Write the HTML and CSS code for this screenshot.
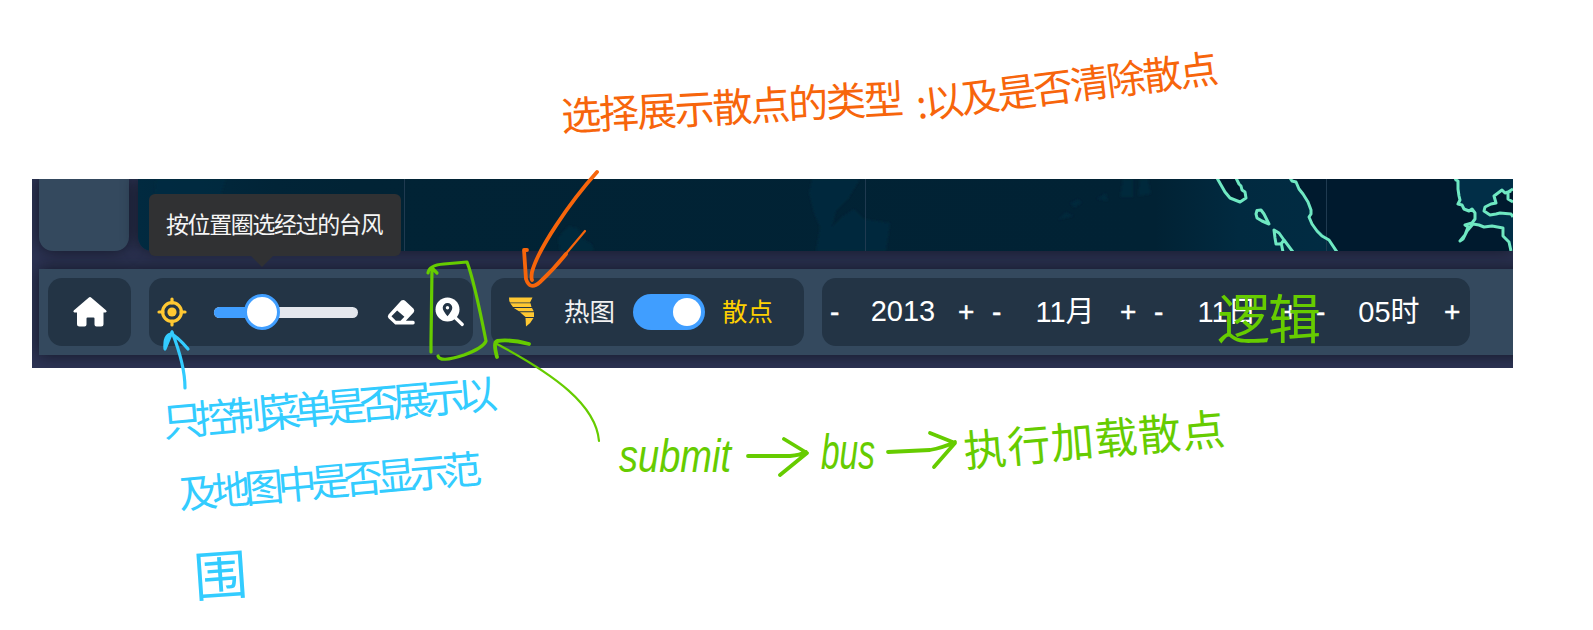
FILE: index.html
```html
<!DOCTYPE html>
<html lang="zh-CN">
<head>
<meta charset="utf-8">
<title>台风</title>
<link rel="stylesheet" href="styles.css">
</head>
<body>
<main class="app">
  <div class="upper">
    <aside class="side"></aside>
    <section class="map">
      <svg class="map-art" viewBox="138 179 1375 72">
        <defs>
          <linearGradient id="sea" x1="0" x2="1"><stop offset="0" stop-color="#012a40"/><stop offset=".1" stop-color="#012437"/><stop offset=".16" stop-color="#012335"/><stop offset=".74" stop-color="#012234"/><stop offset=".8" stop-color="#012a40"/><stop offset="1" stop-color="#012e47"/></linearGradient>
          <filter id="soft"><feGaussianBlur stdDeviation="1.2"/></filter>
        </defs>
        <path fill="url(#sea)" d="M138 179H1513V251H138z"/>
        <g fill="#012c40" filter="url(#soft)">
          <path d="M156 179h70l-8 24-40 8-24-8zM812 179h48l-12 20-12 12-4 16 10-10 12-8 10 10 26 4-4 28h-70l4-24-6-14-5-20z" opacity=".65"/>
          <path d="M558 238l10-12 10 2 4 10 10 6 2 7h-34zM1058 220l8-8 8 4zM1070 203l8-4 4 4-8 5zM1096 199l10-6 2 8zM1120 197l3-18h10v18zM1138 196l2-17h8l3 15z" opacity=".6"/>
        </g>
        <g fill="#001a2e">
          <path d="M1290 179l6 2 3 7 9 14 3 8-2 7 7 10 12 11 8 13H1513V179z"/>
          <path d="M1217 179l8 13 5 6 10 4 6-4-4-10-6-9z"/>
        </g>
        <path fill="#012e47" d="M1455 179l3 11 1 13 5 6 9 1 2 7v7l25 2 4 1 2 9 7 15V179z"/>
        <path fill="#001a2e" d="M1513 189l-5 4-6-3-8 6 1 7-10 3-1 5 6 4 10-2 13 4z"/>
        <path fill="none" stroke="#1f3a50" d="M404.5 179v72M865.5 179v72M1326.5 179v72"/>
        <g class="coast">
          <path d="M1217 178l4 7 4 7 5 6 5 2 5 2 6-4-1-6-3-2-1-4-2-2-3-6"/>
          <path d="M1290 178l2 3 4 1 3 7 4 5 5 8 3 8v4l-2 3 3 7 5 7 5 5 7 4 8 12"/>
          <path d="M1257 210.500l4-.5 3 4 5 10-7-3-5-3-1-4z"/>
          <path d="M1274 230l5 3 5 7-3 4-5 0-1-6zM1281 242l2 10M1284 240l9 12"/>
          <path d="M1455 178l1 2 2 1v8l1 7 1 4-2 4 4 1 2 4 5 2 3-2 3 4v6l-3 4-7 2 3 2-3 8-5 6 3-2 4-8 6-7 6 1 5 2 8-1 11 2v8l6 6 2 9"/>
          <path d="M1513 217l-2-3-11-1-4 1-6 1-6-4 1-4 6-3 5-1-2-7 8-6 3 3 6-2M1513 189l-5 3v7l5 3"/>
        </g>
      </svg>
    </section>
  </div>

  <div class="toolbar">
    <button class="box home">
      <svg class="icon-home" viewBox="0 0 34 30"><path d="M15.600.700Q17-.5 18.400.7L33 13.200Q34.500 15 32.500 15.500H30.500V27Q30.500 29.500 28 29.500H23.500Q21.500 29.500 21.500 27.500V21.500Q21.500 20.500 20.500 20.500H14.500Q13.500 20.500 13.500 21.500V27.500Q13.500 29.500 11.500 29.500H6.500Q4 29.500 4 27V15.500H1.500Q-.5 15 1 13.200z"/></svg>
    </button>

    <div class="box tools">
      <svg class="icon-aim" viewBox="0 0 30 30"><circle cx="15" cy="15" r="9.400"/><path d="M15 2V6M15 24V28M2 15H6M24 15H28"/><circle class="dot" cx="15" cy="15" r="4.600"/></svg>
      <div class="slider"><div class="slider-fill"></div><div class="slider-knob"></div></div>
      <svg class="icon-eraser" viewBox="0 0 30 27"><path fill-rule="evenodd" d="M14.800 1.200Q17 0 19 1.500L27.500 9.500Q29 11.500 27.500 13.500L19.500 22H27Q28.700 22.200 28.700 24T27 26H8.500L1.600 19.500Q0 17.500 1.600 15.500zM10.500 11.500L4.600 17.500 9.200 22H14L18 18z"/></svg>
      <svg class="icon-find" viewBox="0 0 30 30"><circle cx="12.500" cy="12.500" r="12"/><path class="handle" d="M20 20.500l7.300 7"/><path class="pin" d="M12.500 6a4.800 4.800 0 0 1 4.800 4.800q0 3-4.800 8.400q-4.800-5.400-4.800-8.400a4.800 4.800 0 0 1 4.800-4.800z"/><circle cx="12.500" cy="10.800" r="1.700"/></svg>
    </div>

    <div class="box mode">
      <svg class="icon-typhoon" viewBox="0 0 26 30"><path d="M0 .5H23.500L21 5.500H1Q0 4 0 .5zM1.200 6.300H21.500L22.500 10H4zM4.800 10.900H23L24.700 14.300H10zM11 15.200H25V20H16.500zM16.500 20.900H24.500Q22 26 17 29.500z"/></svg>
      <span class="mode-name">热图</span>
      <div class="switch"><i></i></div>
      <span class="mode-name active">散点</span>
    </div>

    <div class="box dates">
      <div class="step"><b>-</b><span class="year">2013</span><b>+</b></div>
      <div class="step"><b>-</b><span>11月</span><b>+</b></div>
      <div class="step"><b>-</b><span>11日</span><b>+</b></div>
      <div class="step"><b>-</b><span>05时</span><b>+</b></div>
    </div>
  </div>
</main>

<div class="tooltip">按位置圈选经过的台风</div>

<svg class="notes" viewBox="0 0 1593 630">
  <g class="ink orange">
    <text font-size="40" textLength="343" transform="translate(562 131) rotate(-3)">选择展示散点的类型</text>
    <text font-size="39" textLength="304" transform="translate(918 119) rotate(-7)">:以及是否清除散点</text>
    <path class="fat" d="M597 172C570 202 538 249 532 272Q531 278 532 280"/>
    <path class="fat" d="M527 250L524 250L526 279Q530 291 540 282Q553 270 566 254"/>
    <path class="thin" d="M564 256L585 231"/>
  </g>
  <g class="ink blue">
    <text font-size="40" textLength="336" transform="translate(164 437) rotate(-5)">只控制菜单是否展示以</text>
    <text font-size="39" textLength="304" transform="translate(180 509) rotate(-5)">及地图中是否显示范</text>
    <text font-size="54" transform="translate(195 597) rotate(-4)">围</text>
    <path d="M185 388Q185 365 172 332M172 332L165 349Q164 335 171 334Q177 336 188 349"/>
  </g>
  <g class="ink green">
    <text class="latin" font-size="46" textLength="112" lengthAdjust="spacingAndGlyphs" transform="translate(619 472)">submit</text>
    <text class="latin" font-size="50" textLength="54" lengthAdjust="spacingAndGlyphs" transform="translate(821 469)">bus</text>
    <text font-size="43" textLength="262" transform="translate(965 467) rotate(-5)">执行加载散点</text>
    <text font-size="53" textLength="104" transform="translate(1217 339)">逻辑</text>
    <path class="fat" d="M748 456H790Q800 455 806 452M784 439L807 453L780 475"/>
    <path class="fat" d="M888 452L930 450Q942 448 955 442M930 433L955 443L934 467"/>
    <path d="M431 352L431 342L432 268M428 273Q429 265 444 264L467 262Q474 280 486 341Q483 348 464 355Q440 363 438 356M432 268L437 273"/>
    <path class="thin" d="M599 441C596 405 555 375 497 344"/>
    <path class="fat" d="M529 344Q510 339 497 341Q493 342 497 357"/>
  </g>
</svg>
</body>
</html>
```
FILE: styles.css
```css
* { box-sizing: border-box; }
body {
  margin: 0;
  width: 1593px;
  height: 630px;
  background: #fff;
  overflow: hidden;
  position: relative;
  font-family: "Liberation Sans", "Noto Sans CJK SC", sans-serif;
}
.app {
  margin: 0 0 0 32px;
  width: 1481px;
  height: 368px;
  padding-left: 7px;
  border-top: 179px solid #fff;
  background: #2d3454;
  overflow: hidden;
}
.upper { display: flex; gap: 9px; height: 72px; }
.side {
  width: 90px;
  background: #34495e;
  border-radius: 0 0 14px 14px;
  box-shadow: 0 0 16px rgba(10, 12, 20, .75);
}
.map {
  width: 1375px;
  border-radius: 0 0 0 14px;
  box-shadow: 0 0 16px rgba(10, 12, 20, .75);
  overflow: hidden;
}
.map-art { display: block; width: 1375px; height: 72px; }
.coast path {
  fill: none;
  stroke: #6fe8c2;
  stroke-width: 3;
  stroke-linejoin: round;
}
.toolbar {
  margin-top: 18px;
  height: 86px;
  width: 1490px;
  padding: 9px;
  display: flex;
  gap: 18px;
  background: #34495e;
  box-shadow: 0 0 16px rgba(10, 12, 20, .75);
}
.box {
  height: 68px;
  border: 0;
  border-radius: 14px;
  background: #233445;
  display: flex;
  align-items: center;
  flex: none;
}
.home { width: 83px; padding: 0; justify-content: center; }
.icon-home { width: 34px; height: 30px; fill: #fff; }
.tools { width: 324px; padding-left: 8px; }
.icon-aim { width: 30px; height: 30px; fill: none; stroke: #ffc832; stroke-width: 3.2; stroke-linecap: round; }
.icon-aim .dot { fill: #ffc832; stroke: none; }
.slider {
  width: 144px;
  height: 11px;
  margin-left: 27px;
  border-radius: 6px;
  background: #e4e7ed;
  display: flex;
  align-items: center;
}
.slider-fill { width: 48px; height: 11px; border-radius: 6px 0 0 6px; background: #409eff; }
.slider-knob { width: 36px; height: 36px; margin-left: -18px; border: 3px solid #409eff; border-radius: 50%; background: #fff; flex: none; }
.icon-eraser { width: 29px; height: 27px; margin-left: 29px; fill: #fff; }
.icon-find { width: 30px; height: 30px; margin-left: 19px; fill: #fff; }
.icon-find .handle { stroke: #fff; stroke-width: 3.2; stroke-linecap: round; }
.icon-find .pin { fill: #233445; }
.mode { width: 313px; padding-left: 18px; }
.icon-typhoon { width: 26px; height: 30px; fill: #ffc832; }
.mode-name { margin-left: 29px; width: 51px; font-size: 25.500px; line-height: 36px; color: #f1f1f1; white-space: nowrap; }
.switch { width: 72px; height: 36px; margin-left: 18px; padding: 4px; border-radius: 18px; background: #409eff; display: flex; justify-content: flex-end; }
.switch i { width: 28px; height: 28px; border-radius: 50%; background: #fff; }
.mode-name.active { margin-left: 17px; color: #ffd000; }
.dates { width: 648px; }
.step { width: 162px; display: flex; align-items: center; color: #fff; font-size: 29px; line-height: 40px; }
.step b { width: 18px; margin-left: 8px; font-weight: 400; font-size: 28px; -webkit-text-stroke: .4px #fff; }
.step span { width: 110px; text-align: center; }
.step .year { position: relative; top: -1px; }
.step b:last-child { margin-left: 0; }
.tooltip {
  position: absolute;
  left: 149px;
  top: 194px;
  width: 252px;
  height: 62px;
  padding-left: 17px;
  border-radius: 6px;
  background: #303133;
  color: #f5f5f5;
  font-size: 23px;
  letter-spacing: -1.4px;
  line-height: 63px;
  white-space: nowrap;
}
.tooltip::after {
  content: "";
  position: absolute;
  left: 102px;
  top: 62px;
  border: 11px solid transparent;
  border-top-color: #303133;
  border-bottom: 0;
}
.notes { position: absolute; left: 0; top: 0; width: 1593px; height: 630px; }
.ink path { fill: none; stroke-width: 3.2; stroke-linecap: round; stroke-linejoin: round; }
.ink path.fat { stroke-width: 3.8; }
.ink path.thin { stroke-width: 2.2; }
.ink text { font-family: "Noto Sans CJK SC", sans-serif; }
.ink text.latin { font-family: "Liberation Sans", sans-serif; font-style: italic; }
.orange path { stroke: #f7650b; }
.orange text { fill: #f7650b; }
.blue path { stroke: #33ccff; }
.blue text { fill: #33ccff; }
.green path { stroke: #66cc00; }
.green text { fill: #66cc00; }
```
